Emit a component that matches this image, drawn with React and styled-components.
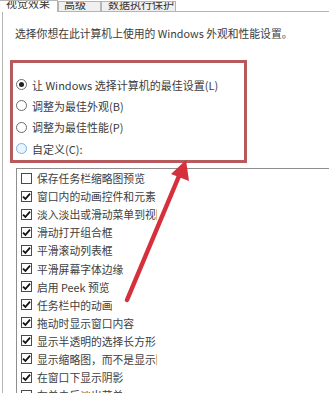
import React from "react";
import styled, { createGlobalStyle } from "styled-components";

const Global = createGlobalStyle`
  html, body { margin: 0; padding: 0; background: #ffffff; }
  body { font-family: "Noto Sans CJK SC", "Noto Sans", sans-serif; }
`;

const Page = styled.div`
  position: relative;
  width: 329px;
  height: 393px;
  overflow: hidden;
  background: #fff;
  color: #3c3c3c;
  font-size: 11px;
`;

const TabBar = styled.div`
  display: flex;
  align-items: flex-end;
  height: 12px;
  overflow: hidden;
`;

const Tab = styled.div`
  box-sizing: border-box;
  height: ${(p) => (p.$active ? "13px" : "11px")};
  width: ${(p) => p.$w}px;
  padding-left: ${(p) => p.$pad}px;
  line-height: 10px;
  font-size: 11px;
  color: #333;
  background: ${(p) => (p.$active ? "#fff" : "#f0f0f0")};
  border: 1px solid #b4b4b4;
  border-bottom: ${(p) => (p.$active ? "none" : "1px solid #b4b4b4")};
  border-left: ${(p) => (p.$active ? "none" : "1px solid #b4b4b4")};
  margin-bottom: ${(p) => (p.$active ? "-1px" : "0")};
  position: relative;
  z-index: ${(p) => (p.$active ? 1 : 0)};
  white-space: nowrap;
  overflow: hidden;
  span { position: relative; top: -3px; }
`;

const TabFill = styled.div`
  flex: 1;
  height: 1px;
  background: #b4b4b4;
`;

const Panel = styled.div`
  margin-left: 2px;
  border-left: 1px solid #b4b4b4;
  height: 381px;
`;

const Intro = styled.p`
  margin: 0;
  padding: 13px 0 0 12px;
  line-height: 16px;
  font-size: 10.8px;
  white-space: nowrap;
`;

const RadioBox = styled.div`
  box-sizing: border-box;
  margin: 19px 0 0 7px;
  width: 237px;
  height: 103px;
  border: 3px solid #b65a5e;
  padding-top: 11px;
  display: flex;
  flex-direction: column;
`;

const RadioRow = styled.label`
  display: flex;
  align-items: center;
  gap: 5px;
  height: 21.3px;
  flex: none;
  padding-left: 3px;
  white-space: nowrap;
`;

const RadioDot = styled.span`
  box-sizing: border-box;
  width: 11px;
  height: 11px;
  border-radius: 50%;
  border: 1px solid ${(p) => (p.$hover ? "#7fb0dc" : "#6b6b6b")};
  background: ${(p) => (p.$hover ? "#eaf4fc" : "#fff")};
  display: flex;
  align-items: center;
  justify-content: center;
  &::after {
    content: "";
    width: 5px;
    height: 5px;
    border-radius: 50%;
    background: ${(p) => (p.$on ? "#222" : "transparent")};
  }
`;

const ListBox = styled.div`
  margin: 5px 0 0 13px;
  border-top: 1px solid #8e8e8e;
  border-left: 1px solid #8e8e8e;
  height: 300px;
`;

const CheckRow = styled.div`
  display: flex;
  align-items: center;
  height: 18.1px;
  padding-left: 4px;
  gap: 5px;
`;

const Box = styled.span`
  box-sizing: border-box;
  width: 11px;
  height: 11px;
  border: 1px solid #4a4a4a;
  background: #fff;
  display: flex;
  align-items: center;
  justify-content: center;
  flex: none;
`;

const Label = styled.span`
  width: 120px;
  overflow: hidden;
  white-space: nowrap;
  font-size: 10.8px;
  color: #404040;
`;

const Arrow = styled.svg`
  position: absolute;
  left: 0;
  top: 0;
  pointer-events: none;
`;

const radios = [
  { text: "让 Windows 选择计算机的最佳设置(L)", on: true },
  { text: "调整为最佳外观(B)" },
  { text: "调整为最佳性能(P)" },
  { text: "自定义(C):", hover: true },
];

const checks = [
  ["保存任务栏缩略图预览", false],
  ["窗口内的动画控件和元素", true],
  ["淡入淡出或滑动菜单到视图", true],
  ["滑动打开组合框", true],
  ["平滑滚动列表框", true],
  ["平滑屏幕字体边缘", true],
  ["启用 Peek 预览", true],
  ["任务栏中的动画", true],
  ["拖动时显示窗口内容", true],
  ["显示半透明的选择长方形", true],
  ["显示缩略图，而不是显示图标", true],
  ["在窗口下显示阴影", true],
  ["在单击后淡出菜单", false],
];

function Check() {
  return (
    <svg width="9" height="9" viewBox="0 0 9 9">
      <path d="M1 4.6 L3.4 7 L8 1.6" fill="none" stroke="#111" strokeWidth="1.8" />
    </svg>
  );
}

export default function App() {
  return (
    <Page>
      <Global />
      <TabBar>
        <Tab $active $w={58} $pad={6}><span>视觉效果</span></Tab>
        <Tab $w={43} $pad={5}><span>高级</span></Tab>
        <Tab $w={75} $pad={6}><span>数据执行保护</span></Tab>
        <TabFill />
      </TabBar>
      <Panel>
        <Intro>选择你想在此计算机上使用的 Windows 外观和性能设置。</Intro>
        <RadioBox>
          {radios.map((r) => (
            <RadioRow key={r.text}>
              <RadioDot $on={r.on} $hover={r.hover} />
              {r.text}
            </RadioRow>
          ))}
        </RadioBox>
        <ListBox>
          {checks.map(([t, on]) => (
            <CheckRow key={t}>
              <Box>{on && <Check />}</Box>
              <Label>{t}</Label>
            </CheckRow>
          ))}
        </ListBox>
      </Panel>
      <Arrow width="329" height="393" viewBox="0 0 329 393">
        <line x1="127" y1="300" x2="179" y2="176" stroke="#d5303c" strokeWidth="4.5" strokeLinecap="round" />
        <polygon points="186,160 189,181 171,174" fill="#d5303c" />
      </Arrow>
    </Page>
  );
}
